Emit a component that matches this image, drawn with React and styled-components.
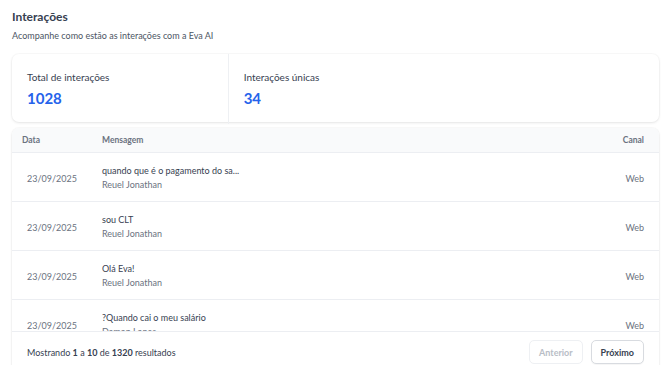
import React from "react";
import styled, { createGlobalStyle } from "styled-components";

const GlobalStyle = createGlobalStyle`
  * { box-sizing: border-box; }
  body {
    margin: 0;
    background: #ffffff;
    font-family: Lato, "Noto Sans", sans-serif;
    color: #1f2937;
  }
`;

const Page = styled.div`
  padding: 8px 11px 0 12px;
  display: flex;
  flex-direction: column;
`;

const Title = styled.h1`
  margin: 0;
  font-size: 12px;
  font-weight: 700;
  color: #374151;
  line-height: 17px;
`;

const Subtitle = styled.p`
  margin: 4px 0 0;
  font-size: 9px;
  color: #4b5563;
  line-height: 14px;
`;

const StatsCard = styled.div`
  margin-top: 11px;
  display: grid;
  grid-template-columns: 1fr 2fr;
  background: #fff;
  border-radius: 7px;
  box-shadow: 0 1px 3px rgba(0, 0, 0, 0.09), 0 0 0 1px rgba(0, 0, 0, 0.02);
  height: 68px;
`;

const Stat = styled.div`
  padding: 16px 15px;
  border-left: ${(p) => (p.divided ? "1px solid #eef0f3" : "none")};
`;

const StatLabel = styled.div`
  font-size: 10px;
  color: #374151;
  line-height: 15px;
`;

const StatValue = styled.div`
  margin-top: 4px;
  font-size: 15px;
  font-weight: 700;
  color: #2563eb;
  line-height: 19px;
`;

const TableCard = styled.div`
  margin-top: 6px;
  background: #fff;
  border-radius: 7px 7px 0 0;
  box-shadow: 0 1px 3px rgba(0, 0, 0, 0.08), 0 0 0 1px rgba(0, 0, 0, 0.02);
  overflow: hidden;
`;

const HeaderRow = styled.div`
  display: grid;
  grid-template-columns: 80px 1fr 80px;
  align-items: center;
  height: 25px;
  padding: 0 15px 0 10px;
  background: #f9fafb;
  border-bottom: 1px solid #eceef2;
`;

const HeadCell = styled.div`
  font-size: 8.5px;
  font-weight: 700;
  color: #6b7280;
  text-align: ${(p) => p.align || "left"};
`;

const Body = styled.div`
  height: 178px;
  overflow: hidden;
`;

const Row = styled.div`
  display: grid;
  grid-template-columns: 75px 1fr 80px;
  align-items: center;
  height: 49px;
  padding: 0 15px;
  border-bottom: 1px solid #eceef2;
`;

const DateCell = styled.div`
  font-size: 9px;
  color: #6b7280;
  padding-top: 2px;
`;

const MessageCell = styled.div`
  display: flex;
  flex-direction: column;
  gap: 1px;
`;

const MessageText = styled.span`
  font-size: 9px;
  color: #374151;
  line-height: 13px;
`;

const Author = styled.span`
  font-size: 9px;
  color: #6b7280;
  line-height: 13px;
`;

const ChannelCell = styled.div`
  font-size: 9px;
  color: #6b7280;
  text-align: right;
  padding-top: 2px;
`;

const Footer = styled.div`
  display: flex;
  align-items: center;
  justify-content: space-between;
  padding: 8px 15px;
  border-top: 1px solid #eceef2;
  background: #fff;
`;

const Summary = styled.div`
  font-size: 9px;
  color: #374151;

  b {
    font-weight: 700;
  }
`;

const Pager = styled.div`
  display: flex;
  gap: 8px;
`;

const PageButton = styled.button`
  height: 24px;
  padding: 0 9px;
  font-family: inherit;
  font-size: 9px;
  font-weight: 700;
  background: #fff;
  border-radius: 5px;
  border: 1px solid ${(p) => (p.disabled ? "#eef0f3" : "#d8dbe0")};
  color: ${(p) => (p.disabled ? "#b8bdc6" : "#374151")};
  box-shadow: ${(p) => (p.disabled ? "none" : "0 1px 1px rgba(0,0,0,0.04)")};
`;

const rows = [
  { date: "23/09/2025", msg: "quando que é o pagamento do sa...", author: "Reuel Jonathan", channel: "Web" },
  { date: "23/09/2025", msg: "sou CLT", author: "Reuel Jonathan", channel: "Web" },
  { date: "23/09/2025", msg: "Olá Eva!", author: "Reuel Jonathan", channel: "Web" },
  { date: "23/09/2025", msg: "?Quando cai o meu salário", author: "Damon Lopes", channel: "Web" },
];

export default function App() {
  return (
    <>
      <GlobalStyle />
      <Page>
        <Title>Interações</Title>
        <Subtitle>Acompanhe como estão as interações com a Eva AI</Subtitle>

        <StatsCard>
          <Stat>
            <StatLabel>Total de interações</StatLabel>
            <StatValue>1028</StatValue>
          </Stat>
          <Stat divided>
            <StatLabel>Interações únicas</StatLabel>
            <StatValue>34</StatValue>
          </Stat>
        </StatsCard>

        <TableCard>
          <HeaderRow>
            <HeadCell>Data</HeadCell>
            <HeadCell>Mensagem</HeadCell>
            <HeadCell align="right">Canal</HeadCell>
          </HeaderRow>
          <Body>
            {rows.map((r, i) => (
              <Row key={i}>
                <DateCell>{r.date}</DateCell>
                <MessageCell>
                  <MessageText>{r.msg}</MessageText>
                  <Author>{r.author}</Author>
                </MessageCell>
                <ChannelCell>{r.channel}</ChannelCell>
              </Row>
            ))}
          </Body>
          <Footer>
            <Summary>
              Mostrando <b>1</b> a <b>10</b> de <b>1320</b> resultados
            </Summary>
            <Pager>
              <PageButton disabled>Anterior</PageButton>
              <PageButton>Próximo</PageButton>
            </Pager>
          </Footer>
        </TableCard>
      </Page>
    </>
  );
}
